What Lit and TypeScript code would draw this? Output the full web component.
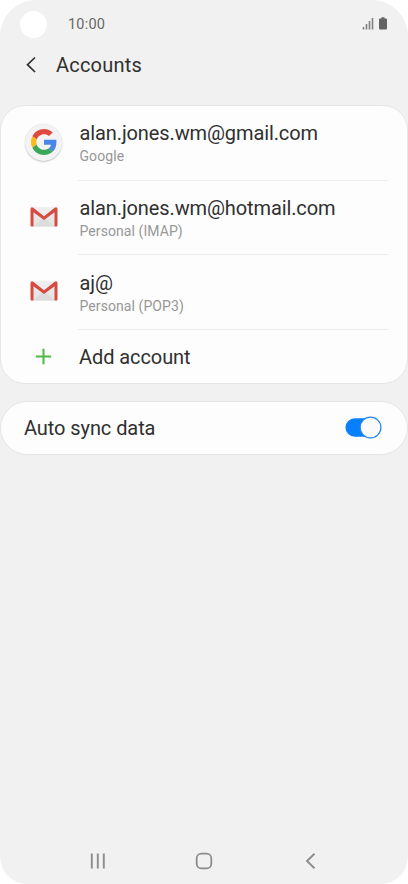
import { LitElement, html, css, svg } from "lit";
import { customElement, state, property } from "lit/decorators.js";

const googleIcon = svg`
  <svg width="26" height="26" viewBox="0 0 48 48">
    <path fill="#de4a3f" d="M24 9.5c3.54 0 6.71 1.22 9.21 3.6l6.85-6.85C35.9 2.38 30.47 0 24 0 14.62 0 6.51 5.38 2.56 13.22l7.98 6.19C12.43 13.72 17.74 9.5 24 9.5z"/>
    <path fill="#4a86e8" d="M46.98 24.55c0-1.57-.15-3.09-.38-4.55H24v9.02h12.94c-.58 2.96-2.26 5.48-4.78 7.18l7.73 6c4.51-4.18 7.09-10.36 7.09-17.65z"/>
    <path fill="#fbbc1d" d="M10.53 28.59c-.48-1.45-.76-2.99-.76-4.59s.27-3.14.76-4.59l-7.98-6.19C.92 16.46 0 20.12 0 24c0 3.88.92 7.54 2.56 10.78l7.97-6.19z"/>
    <path fill="#3aa757" d="M24 48c6.48 0 11.93-2.13 15.89-5.81l-7.73-6c-2.15 1.45-4.92 2.3-8.16 2.3-6.26 0-11.57-4.22-13.47-9.91l-7.98 6.19C6.51 42.62 14.62 48 24 48z"/>
  </svg>`;

const gmailIcon = svg`
  <svg width="28" height="20" viewBox="0 0 28 20">
    <rect x="1" y="0.5" width="26" height="19" rx="1.2" fill="#e6e6e6"/>
    <path d="M3.300 19.500 14 10l10.700 9.500z" fill="#dcdcdc"/>
    <path d="M3 0.500h22L14 9z" fill="#ededed"/>
    <path d="M0.500 2Q0.500 0.300 2 0.300L3.200 0.700 14 9.200 24.800 0.700 26 0.300Q27.500 0.300 27.500 2V18.300Q27.500 19.500 26.300 19.500H24.500V5.200L14 13 3.500 5.200V19.500H1.700Q0.500 19.500 0.500 18.300Z" fill="#d54b3f"/>
  </svg>`;

const plusIcon = svg`
  <svg width="17" height="17" viewBox="0 0 17 17">
    <path d="M8.500 0.800v15.400M0.800 8.500h15.400" stroke="#4fb846" stroke-width="2" fill="none"/>
  </svg>`;

@customElement("account-row")
class AccountRow extends LitElement {
  @property() label = "";
  @property() detail = "";
  @property() icon = "";

  static styles = css`
    :host { display: flex; height: 74.700px; }
    .icon { width: 37px; margin-left: 24px; display: flex; justify-content: center; align-items: center; height: 72px; flex: none; }
    .disc { width: 37px; height: 37px; border-radius: 50%; background: #f3f3f3; box-shadow: 0 1px 1.500px #0003, 0 0 1px #0002; display: flex; align-items: center; justify-content: center; box-sizing: border-box; }
    .text { flex: 1; margin: 0 19px 0 16px; padding: 14.300px 0 0 1.500px; border-bottom: 1px solid #ececec; }
    .label { font-size: 20px; letter-spacing: -0.110px; line-height: 26px; color: #303030; white-space: nowrap; }
    .detail { font-size: 14px; letter-spacing: 0.080px; line-height: 18px; color: #979797; margin-top: 1px; }
  `;

  render() {
    return html`
      <div class="icon">
        ${this.icon === "google" ? html`<div class="disc">${googleIcon}</div>` : gmailIcon}
      </div>
      <div class="text">
        <div class="label">${this.label}</div>
        <div class="detail">${this.detail}</div>
      </div>`;
  }
}

@customElement("app-root")
class AppRoot extends LitElement {
  @state() accounts = [
    { label: "alan.jones.wm@gmail.com", detail: "Google", icon: "google" },
    { label: "alan.jones.wm@hotmail.com", detail: "Personal (IMAP)", icon: "gmail" },
    { label: "aj@", detail: "Personal (POP3)", icon: "gmail" },
  ];

  static styles = css`
    :host { display: block; background: #fff; font-family: Roboto, sans-serif; color: #303030; }
    .screen { width: 408px; height: 884px; box-sizing: border-box; background: #f1f1f1; border-radius: 36px 36px 27px 27px; display: flex; flex-direction: column; overflow: hidden; }
    .status { height: 47px; display: flex; align-items: center; padding: 0 20px; flex: none; }
    .camera { width: 27px; height: 27px; border-radius: 50%; background: #fff; margin-top: 1px; }
    .time { margin: 2px 0 0 21px; flex: 1; font-size: 14.500px; letter-spacing: 0.200px; line-height: 18px; color: #686868; }
    .header { height: 58px; flex: none; display: flex; padding: 0 25px; }
    .header svg { margin-top: 9px; }
    .title { margin-left: 19px; font-size: 20px; letter-spacing: 0.200px; line-height: 37px; }
    .card { background: #fdfdfd; border: 1px solid #e5e5e5; border-radius: 25px; box-sizing: border-box; flex: none; }
    .accounts { height: 279px; }
    .add { display: flex; height: 53px; align-items: center; }
    .add svg { margin: 0 27px 0 34px; }
    .add span { font-size: 20px; letter-spacing: -0.080px; margin-top: 1px; }
    .sync { margin-top: 17px; height: 54px; border-radius: 27px; display: flex; align-items: center; justify-content: space-between; padding: 0 25px 0 23px; font-size: 20px; letter-spacing: -0.080px; }
    .nav { margin-top: auto; height: 46px; flex: none; display: flex; justify-content: center; gap: 88px; align-items: center; }
  `;

  render() {
    return html`
      <div class="screen">
        <div class="status">
          <div class="camera"></div>
          <div class="time">10:00</div>
          <svg width="26" height="13" viewBox="0 0 26 13">
            <path d="M1.500 10v2.500M4.500 7v5.500M7.500 4v8.500M10.500 1v11.500" stroke="#808080" stroke-width="1.600"/>
            <path d="M19.500 0.300h3v1.200h1.500a1 1 0 0 1 1 1v9a1 1 0 0 1-1 1h-6a1 1 0 0 1-1-1v-9a1 1 0 0 1 1-1h1.500z" fill="#636363"/>
          </svg>
        </div>
        <div class="header">
          <svg width="12" height="18" viewBox="0 0 12 18">
            <path d="M10 1.500 2.500 8.700 10 16" fill="none" stroke="#303030" stroke-width="1.700"/>
          </svg>
          <div class="title">Accounts</div>
        </div>
        <div class="card accounts">
          ${this.accounts.map(a => html`<account-row .label=${a.label} .detail=${a.detail} .icon=${a.icon}></account-row>`)}
          <div class="add">${plusIcon}<span>Add account</span></div>
        </div>
        <div class="card sync">
          <span>Auto sync data</span>
          <svg width="37" height="24" viewBox="0 0 37 24">
            <rect x="0.500" y="2.300" width="33" height="18.400" rx="9.200" fill="#087fff"/>
            <circle cx="25.500" cy="11.500" r="10.400" fill="#fafafa" stroke="#2386ee" stroke-width="1.200"/>
          </svg>
        </div>
        <div class="nav">
          <svg width="18" height="18" viewBox="0 0 18 18">
            <path d="M3 1.500v15M9 1.500v15M15 1.500v15" transform="translate(-0.200 0)" stroke="#8c8c8c" stroke-width="1.900"/>
          </svg>
          <svg width="18" height="18" viewBox="0 0 18 18">
            <rect x="1.700" y="1.700" width="14.600" height="14.600" rx="4.500" fill="none" stroke="#8c8c8c" stroke-width="1.800"/>
          </svg>
          <svg width="18" height="18" viewBox="0 0 18 18">
            <path d="M13.500 1.700 6 9l7.500 7.300" fill="none" stroke="#8c8c8c" stroke-width="1.900"/>
          </svg>
        </div>
      </div>`;
  }
}
